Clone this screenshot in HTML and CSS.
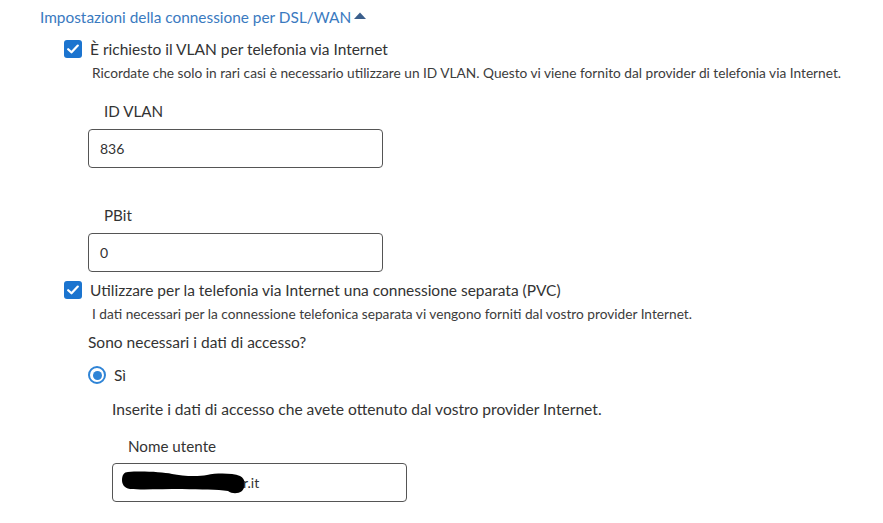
FILE: index.html
```html
<!DOCTYPE html>
<html lang="it">
<head>
<meta charset="utf-8">
<title>Impostazioni DSL/WAN</title>
<link rel="stylesheet" href="styles.css">
</head>
<body>
<div class="page">
  <div class="section-title">
    <span>Impostazioni della connessione per DSL/WAN</span>
    <svg class="caret" width="12" height="7" viewBox="0 0 12 7"><path d="M0 7 L6 0.5 L12 7 Z" fill="#3b5f8c"/></svg>
  </div>

  <div class="check-row row-vlan">
    <span class="checkbox"><svg width="12" height="10" viewBox="0 0 12 10"><path d="M1.2 5.2 L4.5 8.3 L10.8 1.6" fill="none" stroke="#fff" stroke-width="2.2" stroke-linecap="round" stroke-linejoin="round"/></svg></span>
    <span class="check-label">È richiesto il VLAN per telefonia via Internet</span>
  </div>
  <div class="hint hint-vlan">Ricordate che solo in rari casi è necessario utilizzare un ID VLAN. Questo vi viene fornito dal provider di telefonia via Internet.</div>

  <div class="field field-id">
    <div class="field-label">ID VLAN</div>
    <div class="input">836</div>
  </div>

  <div class="field field-pbit">
    <div class="field-label">PBit</div>
    <div class="input">0</div>
  </div>

  <div class="check-row row-pvc">
    <span class="checkbox"><svg width="12" height="10" viewBox="0 0 12 10"><path d="M1.2 5.2 L4.5 8.3 L10.8 1.6" fill="none" stroke="#fff" stroke-width="2.2" stroke-linecap="round" stroke-linejoin="round"/></svg></span>
    <span class="check-label">Utilizzare per la telefonia via Internet una connessione separata (PVC)</span>
  </div>
  <div class="hint hint-pvc">I dati necessari per la connessione telefonica separata vi vengono forniti dal vostro provider Internet.</div>

  <div class="question">Sono necessari i dati di accesso?</div>
  <div class="radio-row">
    <span class="radio"><span class="radio-dot"></span></span>
    <span class="radio-label">Sì</span>
  </div>

  <div class="sub">
    <div class="sub-text">Inserite i dati di accesso che avete ottenuto dal vostro provider Internet.</div>
    <div class="field field-user">
      <div class="field-label">Nome utente</div>
      <div class="input input-user">
        <svg class="scribble" width="124" height="23" viewBox="0 0 124 23"><path d="M6 1 C20 0 40 1 50 3 C60 5 75 6 85 4 C95 2 110 2 118 5 C124 8 124 16 120 20 C116 23 110 23 106 20 C95 18 80 19 60 18 C40 18 20 19 8 18 C2 17 0 13 0 9 C0 4 2 1 6 1 Z" fill="#000"/></svg><span class="user-text">r.it</span>
      </div>
    </div>
  </div>
</div>
</body>
</html>
```

FILE: styles.css
```css
html, body {
  margin: 0;
  padding: 0;
  background: #fff;
}

body {
  font-family: Lato, "Liberation Sans", sans-serif;
  color: #333;
  font-size: 15.5px;
}

.page {
  padding-top: 7px;
}

.section-title {
  margin-left: 40px;
  height: 20px;
  line-height: 20px;
  color: #3a7abf;
  font-size: 15.4px;
  display: flex;
  align-items: center;
  gap: 3px;
}

.caret {
  display: block;
  margin-top: -3px;
}

.check-row {
  display: flex;
  align-items: center;
  height: 18px;
  margin-left: 64px;
  gap: 8px;
}

.row-vlan {
  margin-top: 13px;
}

.row-pvc {
  margin-top: 9px;
}

.checkbox {
  width: 18px;
  height: 18px;
  border-radius: 3px;
  background: #1b74cf;
  display: flex;
  align-items: center;
  justify-content: center;
  flex: none;
}

.check-label {
  font-size: 15.5px;
  color: #333;
  line-height: 18px;
}

.hint {
  margin-left: 92px;
  font-size: 13.7px;
  line-height: 16px;
  color: #3c3c3c;
  margin-top: 7px;
}

.field {
  margin-left: 88px;
}

.field-id {
  margin-top: 20px;
}

.field-pbit {
  margin-top: 37px;
}

.field-label {
  padding-left: 16px;
  font-size: 15.2px;
  line-height: 20px;
  color: #333;
}

.input {
  margin-top: 8px;
  width: 282px;
  height: 37px;
  border: 1px solid #555;
  border-radius: 4px;
  padding-left: 11px;
  box-sizing: content-box;
  font-size: 14px;
  line-height: 37px;
  color: #333;
}

.question {
  margin-left: 88px;
  margin-top: 10px;
  line-height: 20px;
  font-size: 15.5px;
}

.radio-row {
  margin-left: 88px;
  margin-top: 14px;
  display: flex;
  align-items: center;
  gap: 8px;
  height: 18px;
}

.radio {
  width: 14px;
  height: 14px;
  border: 2px solid #2f84d6;
  border-radius: 50%;
  display: flex;
  align-items: center;
  justify-content: center;
  flex: none;
}

.radio-dot {
  width: 9px;
  height: 9px;
  border-radius: 50%;
  background: #2f84d6;
}

.radio-label {
  font-size: 15.5px;
  line-height: 18px;
}

.sub {
  margin-left: 112px;
  margin-top: 15px;
}

.sub-text {
  font-size: 15.6px;
  line-height: 20px;
}

.field-user {
  margin-left: 0;
  margin-top: 17px;
}

.input-user {
  margin-top: 7px;
  display: flex;
  align-items: center;
  padding-left: 9px;
  width: 284px;
}

.scribble {
  display: block;
  flex: none;
}

.user-text {
  margin-left: -3px;
}
```
